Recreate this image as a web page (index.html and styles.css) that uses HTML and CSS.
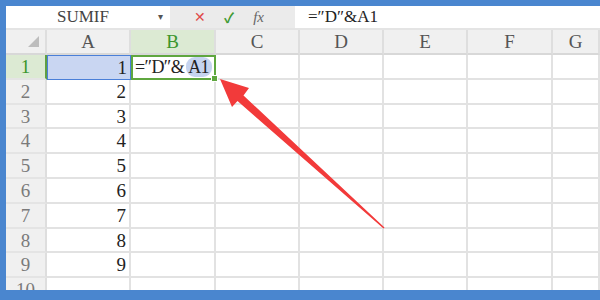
FILE: index.html
```html
<!DOCTYPE html>
<html lang="zh-CN">
<head>
    <meta charset="UTF-8">
    <title>SUMIF</title>
    <link rel="stylesheet" href="styles.css">
</head>
<body>
    <div class="frame">
        <div class="formula-bar">
            <div class="namebox">SUMIF<span class="drop">&#9662;</span></div>
            <div class="tools">
                <span class="cancel">&#10005;</span>
                <span class="ok">&#10003;</span>
                <span class="fx">fx</span>
            </div>
            <div class="formula">=″D″&amp;A1</div>
        </div>

        <div class="sheet">
            <div class="hd corner"><span class="tri"></span></div>
            <div class="hd">A</div>
            <div class="hd active">B</div>
            <div class="hd">C</div>
            <div class="hd">D</div>
            <div class="hd">E</div>
            <div class="hd">F</div>
            <div class="hd">G</div>

            <div class="rh active">1</div>
            <div class="c num ref">1</div>
            <div class="c edit">=″D″&amp;<span class="pill">A1</span></div>
            <div class="c"></div><div class="c"></div><div class="c"></div><div class="c"></div><div class="c"></div>

            <div class="rh">2</div><div class="c num">2</div>
            <div class="c"></div><div class="c"></div><div class="c"></div><div class="c"></div><div class="c"></div><div class="c"></div>
            <div class="rh">3</div><div class="c num">3</div>
            <div class="c"></div><div class="c"></div><div class="c"></div><div class="c"></div><div class="c"></div><div class="c"></div>
            <div class="rh">4</div><div class="c num">4</div>
            <div class="c"></div><div class="c"></div><div class="c"></div><div class="c"></div><div class="c"></div><div class="c"></div>
            <div class="rh">5</div><div class="c num">5</div>
            <div class="c"></div><div class="c"></div><div class="c"></div><div class="c"></div><div class="c"></div><div class="c"></div>
            <div class="rh">6</div><div class="c num">6</div>
            <div class="c"></div><div class="c"></div><div class="c"></div><div class="c"></div><div class="c"></div><div class="c"></div>
            <div class="rh">7</div><div class="c num">7</div>
            <div class="c"></div><div class="c"></div><div class="c"></div><div class="c"></div><div class="c"></div><div class="c"></div>
            <div class="rh">8</div><div class="c num">8</div>
            <div class="c"></div><div class="c"></div><div class="c"></div><div class="c"></div><div class="c"></div><div class="c"></div>
            <div class="rh">9</div><div class="c num">9</div>
            <div class="c"></div><div class="c"></div><div class="c"></div><div class="c"></div><div class="c"></div><div class="c"></div>
            <div class="rh">10</div><div class="c"></div>
            <div class="c"></div><div class="c"></div><div class="c"></div><div class="c"></div><div class="c"></div><div class="c"></div>
        </div>

        <svg class="arrow" width="600" height="300" viewBox="0 0 600 300">
            <polygon points="220,79 249,88 243.5,95.5 384.5,227.5 383.5,228.5 237.5,101 232,107" fill="#f23a3a"/>
        </svg>
    </div>
</body>
</html>
```

FILE: styles.css
```css
body {
    margin: 0;
    background-color: #4a86cf;
    font-family: "Liberation Serif", "Noto Sans CJK SC", serif;
}
.frame {
    position: relative;
    width: 594px;
    height: 284px;
    padding: 6px 0 10px 6px;
    overflow: hidden;
}
.formula-bar {
    display: flex;
    height: 22px;
    background: #fff;
    border-bottom: 2px solid #e4e4e4;
}
.namebox {
    width: 164px;
    padding-left: 51px;
    box-sizing: border-box;
    font-size: 17px;
    line-height: 22px;
    color: #444;
    position: relative;
}
.drop {
    position: absolute;
    left: 152px;
    top: 0;
    font-size: 10px;
    color: #555;
}
.tools {
    width: 125px;
    background: #ebebeb;
    display: flex;
    align-items: center;
    font-size: 14px;
}
.cancel {
    color: #e04a4a;
    margin-left: 24px;
}
.ok {
    color: #3f9a35;
    margin-left: 18px;
    font-weight: bold;
}
.fx {
    color: #666;
    font-style: italic;
    margin-left: 19px;
    font-size: 15px;
}
.formula {
    flex: 1;
    padding-left: 13px;
    font-size: 17px;
    line-height: 22px;
    color: #222;
}
.sheet {
    display: grid;
    grid-template-columns: 41px 84px 85px 84px 84px 84px 85px 47px;
    grid-template-rows: 25px repeat(10, 24.8px);
    height: 260px;
    overflow: hidden;
    background: #fff;
}
.hd {
    background: #f0f0f0;
    border-right: 2px solid #dedede;
    border-bottom: 2px solid #d8d8d8;
    font-size: 19px;
    color: #555;
    text-align: center;
    line-height: 24px;
}
.hd.active {
    background: #dcead3;
    color: #3a962b;
}
.corner {
    position: relative;
}
.tri {
    position: absolute;
    right: 6px;
    bottom: 6px;
    border-left: 11px solid transparent;
    border-bottom: 11px solid #bdbdbd;
}
.rh {
    background: #f0f0f0;
    border-right: 2px solid #dedede;
    border-bottom: 2px solid #e4e4e4;
    font-size: 19px;
    color: #7a7a7a;
    text-align: center;
    line-height: 24px;
}
.rh.active {
    background: #dcead3;
    color: #3a962b;
    border-right-color: #5fa043;
}
.c {
    border-right: 2px solid #e2e2e2;
    border-bottom: 2px solid #e2e2e2;
    font-size: 19px;
    line-height: 24px;
    color: #222;
    box-sizing: border-box;
}
.num {
    text-align: right;
    padding-right: 3px;
}
.ref {
    background: #c9d6f2;
    border: 1px solid #4a7fd8;
    position: relative;
}
.edit {
    border: 2px solid #5fa73f;
    padding-left: 2px;
    font-size: 18px;
    letter-spacing: -0.6px;
    line-height: 21px;
    white-space: nowrap;
    position: relative;
}
.edit::after {
    content: "";
    position: absolute;
    right: -4px;
    bottom: -4px;
    width: 5px;
    height: 5px;
    background: #5fa73f;
    border: 1px solid #fff;
}
.pill {
    background: #c6d4ef;
    border-radius: 9px;
    padding: 0 3px 0 2px;
    margin-left: 2px;
}
.arrow {
    position: absolute;
    left: 0;
    top: 0;
}
```
